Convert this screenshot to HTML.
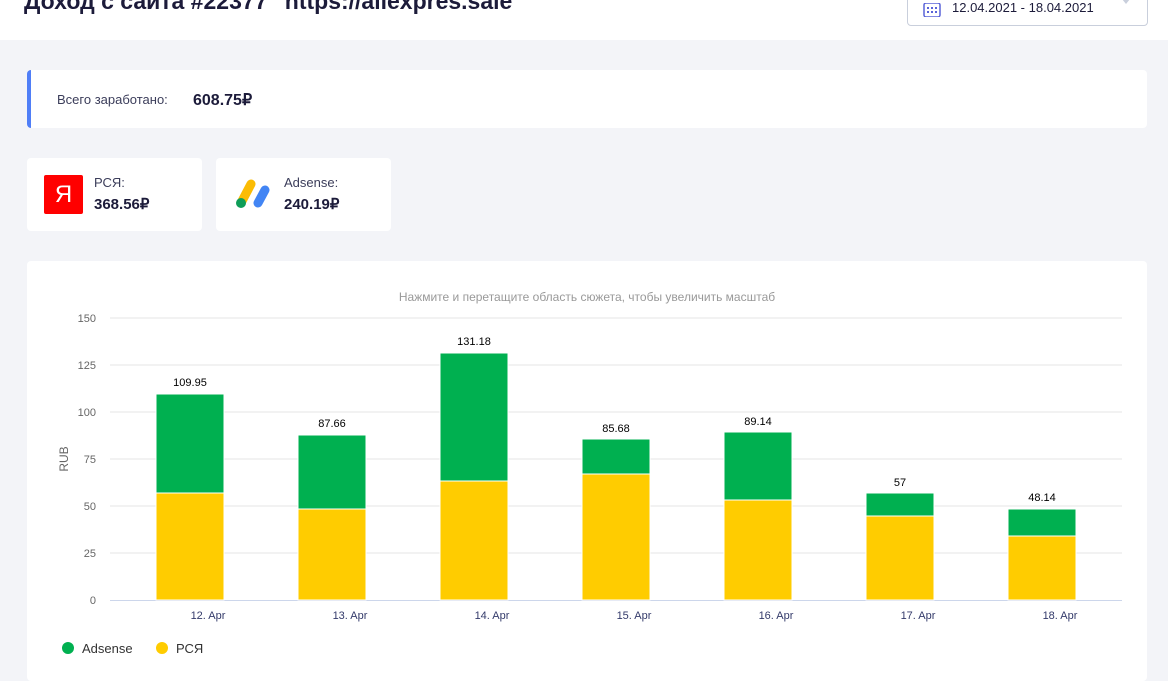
<!DOCTYPE html>
<html><head><meta charset="utf-8"><style>
body{margin:0;width:1168px;height:657px;overflow:hidden;background:#f3f4f8;font-family:"Liberation Sans",sans-serif;position:relative}
.hdr{position:absolute;left:0;top:0;width:1168px;height:40px;background:#fff}
.title{position:absolute;left:24px;top:-12px;font-size:23px;font-weight:bold;color:#1c1b3a}
.date{position:absolute;left:907px;top:-10px;width:239px;height:34px;border:1px solid #c9cfdc;border-radius:4px;background:#fff;font-size:13px;color:#1c1b3a}
.card{position:absolute;background:#fff;border-radius:4px}
.lbl{font-size:13px;color:#3b3d5a}
.val{font-size:15px;font-weight:bold;color:#1c1b3a}
</style></head><body>
<div class="hdr"></div>
<div class="title">Доход с сайта #22377 "https://allexpres.sale"</div>
<div class="date">
<svg style="position:absolute;left:15px;top:12px" width="18" height="14" viewBox="0 0 18 14"><rect x="1" y="0" width="16" height="14" rx="2" fill="none" stroke="#5a63d8" stroke-width="1.5"/><g fill="#5a63d8"><rect x="4" y="4" width="2" height="2"/><rect x="8" y="4" width="2" height="2"/><rect x="12" y="4" width="2" height="2"/><rect x="4" y="8" width="2" height="2"/><rect x="8" y="8" width="2" height="2"/><rect x="12" y="8" width="2" height="2"/></g></svg>
<span style="position:absolute;left:44px;top:9px">12.04.2021 - 18.04.2021</span>
<span style="position:absolute;left:214px;top:8px;border:4px solid transparent;border-top:5px solid #c9cfdc"></span>
</div>
<div class="card" style="left:27px;top:70px;width:1120px;height:58px;border-left:4px solid #4f7ef7;box-sizing:border-box">
<span class="lbl" style="position:absolute;left:26px;top:22px">Всего заработано:</span>
<span class="val" style="position:absolute;left:162px;top:20px;font-size:16px">608.75₽</span></div>
<div class="card" style="left:27px;top:158px;width:175px;height:73px">
<div style="position:absolute;left:17px;top:17px;width:39px;height:39px;background:#f00;border-radius:2px;color:#fff;font-size:24px;text-align:center;line-height:39px">Я</div>
<span class="lbl" style="position:absolute;left:67px;top:17px">РСЯ:</span>
<span class="val" style="position:absolute;left:67px;top:37px">368.56₽</span></div>
<div class="card" style="left:216px;top:158px;width:175px;height:73px">
<svg style="position:absolute;left:18px;top:18px" width="40" height="36" viewBox="0 0 40 36"><line x1="7" y1="27" x2="17" y2="8" stroke="#fbbc04" stroke-width="9" stroke-linecap="round"/><line x1="24" y1="27" x2="31" y2="14" stroke="#4285f4" stroke-width="9" stroke-linecap="round"/><circle cx="7" cy="27" r="5" fill="#0f9d58"/></svg>
<span class="lbl" style="position:absolute;left:68px;top:17px">Adsense:</span>
<span class="val" style="position:absolute;left:68px;top:37px">240.19₽</span></div>
<div class="card" style="left:27px;top:261px;width:1120px;height:420px"></div>
<svg style="position:absolute;left:0;top:0" width="1168" height="657" font-family="Liberation Sans, sans-serif">
<text x="587" y="301" font-size="12" fill="#999" text-anchor="middle">Нажмите и перетащите область сюжета, чтобы увеличить масштаб</text>
<g stroke="#e6e6e6"><line x1="110" x2="1122" y1="318" y2="318"/><line x1="110" x2="1122" y1="365" y2="365"/><line x1="110" x2="1122" y1="412" y2="412"/><line x1="110" x2="1122" y1="459" y2="459"/><line x1="110" x2="1122" y1="506" y2="506"/><line x1="110" x2="1122" y1="553" y2="553"/></g>
<line x1="110" x2="1122" y1="600.5" y2="600.5" stroke="#ccd6eb"/>
<g font-size="11" fill="#666" text-anchor="end"><text x="96" y="322">150</text><text x="96" y="369">125</text><text x="96" y="416">100</text><text x="96" y="463">75</text><text x="96" y="510">50</text><text x="96" y="557">25</text><text x="96" y="604">0</text></g>
<text x="68" y="459" font-size="12" fill="#666" text-anchor="middle" transform="rotate(-90 68 459)">RUB</text>
<g stroke="#fff" stroke-width="1">
<rect x="156" y="394" width="68" height="99" fill="#00b050"/><rect x="156" y="493" width="68" height="107" fill="#ffcc00"/>
<rect x="298" y="435" width="68" height="74" fill="#00b050"/><rect x="298" y="509" width="68" height="91" fill="#ffcc00"/>
<rect x="440" y="353" width="68" height="128" fill="#00b050"/><rect x="440" y="481" width="68" height="119" fill="#ffcc00"/>
<rect x="582" y="439" width="68" height="35" fill="#00b050"/><rect x="582" y="474" width="68" height="126" fill="#ffcc00"/>
<rect x="724" y="432" width="68" height="68" fill="#00b050"/><rect x="724" y="500" width="68" height="100" fill="#ffcc00"/>
<rect x="866" y="493" width="68" height="23" fill="#00b050"/><rect x="866" y="516" width="68" height="84" fill="#ffcc00"/>
<rect x="1008" y="509" width="68" height="27" fill="#00b050"/><rect x="1008" y="536" width="68" height="64" fill="#ffcc00"/>
</g>
<g font-size="11" fill="#000" text-anchor="middle"><text x="190" y="386">109.95</text><text x="332" y="427">87.66</text><text x="474" y="345">131.18</text><text x="616" y="432">85.68</text><text x="758" y="425">89.14</text><text x="900" y="486">57</text><text x="1042" y="501">48.14</text></g>
<g font-size="11" fill="#333a6a" text-anchor="middle"><text x="208" y="619">12. Apr</text><text x="350" y="619">13. Apr</text><text x="492" y="619">14. Apr</text><text x="634" y="619">15. Apr</text><text x="776" y="619">16. Apr</text><text x="918" y="619">17. Apr</text><text x="1060" y="619">18. Apr</text></g>
<circle cx="68" cy="648" r="6" fill="#00b050"/><text x="82" y="653" font-size="13" fill="#333">Adsense</text>
<circle cx="162" cy="648" r="6" fill="#ffcc00"/><text x="176" y="653" font-size="13" fill="#333">РСЯ</text>
</svg>
</body></html>
